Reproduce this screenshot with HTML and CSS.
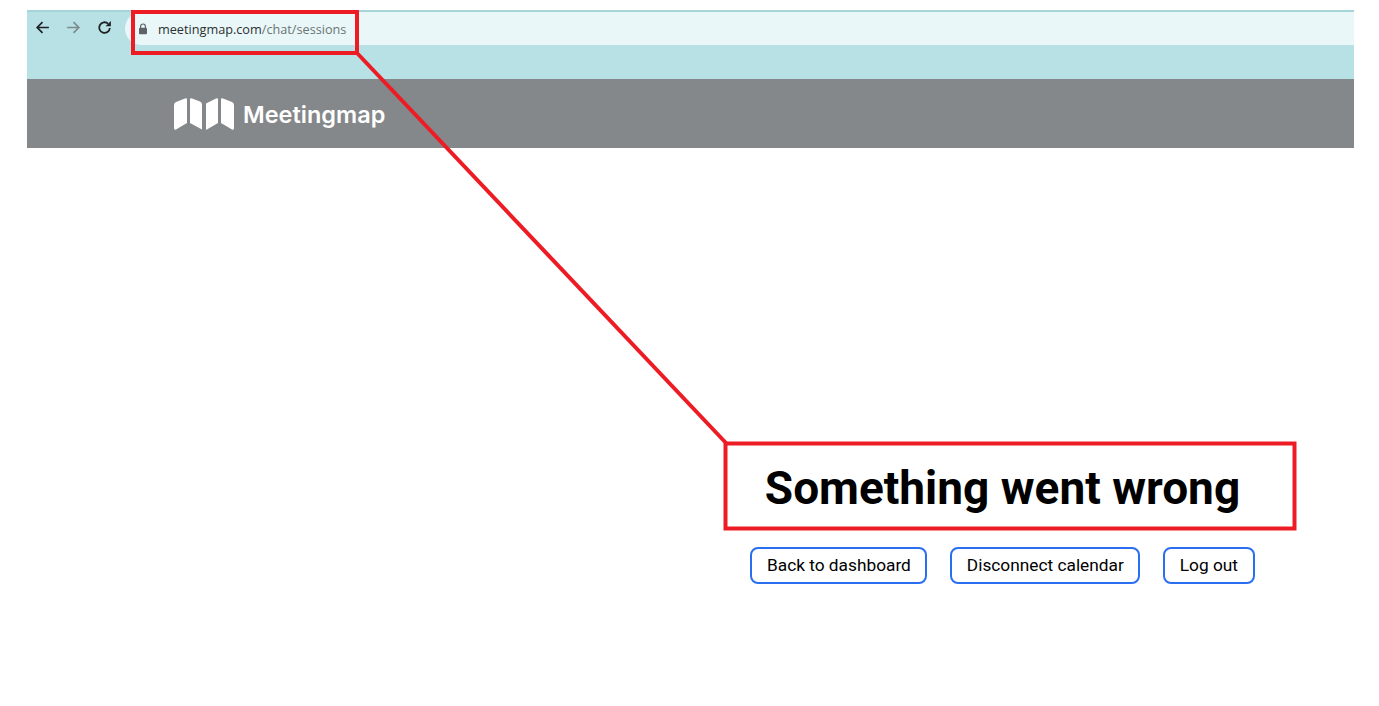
FILE: index.html
```html
<!DOCTYPE html>
<html>
<head>
    <title>Meetingmap - Something went wrong</title>
    <link rel="stylesheet" href="styles.css">
</head>
<body>
    <div class="page">
        <div class="browser-bar">
            <div class="nav-icons">
                <svg class="nav-icon" viewBox="0 0 16 16"><path d="M14 8H3M8 3L3 8l5 5" fill="none" stroke="#202124" stroke-width="1.6"/></svg>
                <svg class="nav-icon" viewBox="0 0 16 16"><path d="M2 8h11M8 3l5 5-5 5" fill="none" stroke="#7d8c8f" stroke-width="1.6"/></svg>
                <svg class="nav-icon" viewBox="0 0 16 16"><path d="M13 8.500A5 5 0 1 1 11.400 4.400" fill="none" stroke="#202124" stroke-width="1.700"/><path d="M14 1.800v5h-5z" fill="#202124"/></svg>
            </div>
            <div class="address-bar">
                <svg class="lock" viewBox="0 0 10 12"><path d="M2.600 5V3.400a2.400 2.400 0 0 1 4.800 0V5" fill="none" stroke="#5f6368" stroke-width="1.200"/><rect x="1" y="4.800" width="8" height="6.400" rx="1" fill="#5f6368"/></svg>
                <span class="url">meetingmap.com<span class="url-path">/chat/sessions</span></span>
            </div>
        </div>
        <div class="tab-strip"></div>
        <header class="site-header">
            <svg class="logo" viewBox="0 0 60 32"><path fill="#fff" d="M0 7Q0 5 2 4L11 .4Q13 -.4 13 1.500V25L2 31.500Q0 32.500 0 30zM16 1.500Q16 -.4 18 .4L26 3.500Q28 4.500 28 6.500V31.500L16 25zM32 5.500L42 .6Q44 -.4 44 1.500V25L32 32zM47 1.500Q47 -.4 49 .4L58 4Q60 5 60 7V30Q60 32.500 58 31.500L47 25z"/></svg>
            <span class="logo-text">Meetingmap</span>
        </header>
        <main class="error-area">
            <div class="error-panel">
                <h1 class="error-title">Something went wrong</h1>
                <div class="error-actions">
                    <button class="action-btn">Back to dashboard</button>
                    <button class="action-btn">Disconnect calendar</button>
                    <button class="action-btn">Log out</button>
                </div>
            </div>
        </main>

        <!-- red annotation drawn over the screenshot -->
        <svg class="annotation" viewBox="0 0 1379 706">
            <rect x="133" y="12" width="224" height="41" />
            <path d="M357 53L726 443" />
            <rect x="725.500" y="443.500" width="569" height="85" />
        </svg>
    </div>
</body>
</html>
```

FILE: styles.css
```css
body {
    font-family: Roboto, Arial, sans-serif;
    margin: 0;
    padding: 0;
    background-color: #fff;
}

.page {
    position: relative;
    height: 706px;
    padding: 10px 25px 0 27px;
    box-sizing: border-box;
    overflow: hidden;
}

.browser-bar {
    display: flex;
    align-items: center;
    height: 35px;
    border-top: 2px solid #a5d5d8;
    box-sizing: border-box;
    background-color: #b7e1e5;
}

.nav-icons {
    display: flex;
    align-items: center;
    gap: 14px;
    width: 98px;
    height: 100%;
    padding: 0 0 2px 7px;
    box-sizing: border-box;
}

.nav-icon {
    width: 17px;
    height: 17px;
}

.address-bar {
    flex: 1;
    display: flex;
    align-items: center;
    height: 33px;
    padding-left: 13px;
    border-radius: 17px 0 0 17px;
    background-color: #e9f7f8;
}

.lock {
    width: 10px;
    height: 12px;
    margin-right: 10px;
}

.url {
    font-family: "Open Sans", Arial, sans-serif;
    font-size: 12.700px;
    color: #2b2f31;
}

.url-path {
    color: #6b7476;
}

.tab-strip {
    height: 34px;
    background-color: #b7e1e5;
}

.site-header {
    display: flex;
    align-items: center;
    gap: 9px;
    height: 69px;
    padding-left: 147px;
    background-color: #85888a;
}

.logo {
    width: 60px;
    height: 32px;
}

.logo-text {
    padding-top: 2px;
    font-family: Inter, sans-serif;
    font-size: 23.500px;
    font-weight: 600;
    color: #fff;
}

.error-area {
    display: flex;
    justify-content: flex-end;
    padding-top: 310px;
    padding-right: 65.500px;
}

.error-panel {
    width: 572px;
    display: flex;
    flex-direction: column;
    align-items: center;
}

.error-title {
    margin: 0 0 29px;
    font-size: 46px;
    line-height: 60px;
    font-weight: 700;
    color: #000;
}

.error-actions {
    display: flex;
    gap: 23px;
}

.action-btn {
    height: 37px;
    padding: 0 14.500px 2px;
    font-family: Roboto, Arial, sans-serif;
    font-size: 17.300px;
    font-weight: 450;
    color: #000;
    background-color: #fff;
    border: 2px solid #2a6ff0;
    border-radius: 8px;
}

.annotation {
    position: absolute;
    left: 0;
    top: 0;
    width: 1379px;
    height: 706px;
    fill: none;
    stroke: #ed1c24;
    stroke-width: 4;
}
```
